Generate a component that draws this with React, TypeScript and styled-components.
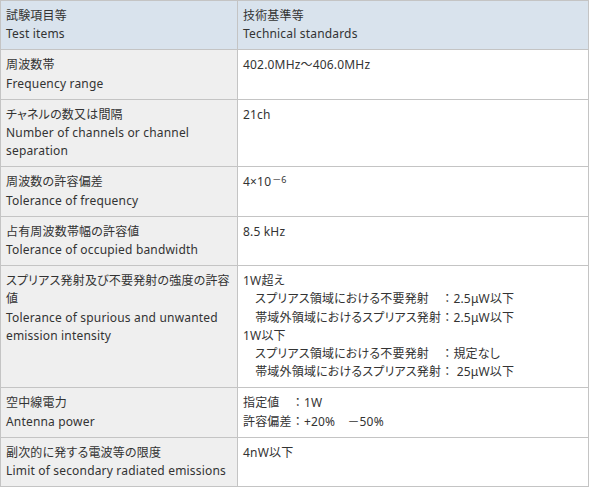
import React from 'react'
import styled, { createGlobalStyle, css } from 'styled-components'

const GlobalStyle = createGlobalStyle`
  body {
    margin: 0;
    background: #fff;
    font-family: "Noto Sans", "Noto Sans CJK JP", sans-serif;
  }
`

const Table = styled.table`
  width: 589px;
  border-collapse: collapse;
  table-layout: fixed;
  font-size: 12px;
  line-height: 18.2px;
  letter-spacing: 0.18px;
  font-feature-settings: "palt";
  color: #333;
`

const cell = css`
  border: 1px solid #c4c4c4;
  padding: 6px 6px 6px 5px;
  vertical-align: top;
  text-align: left;
`

const HeadCell = styled.th<{ $left?: boolean }>`
  ${cell}
  background: #d9e3ed;
  font-weight: normal;
  width: ${(p) => (p.$left ? '225px' : 'auto')};
`

const LabelCell = styled.td`
  ${cell}
  background: #efefef;
`

const ValueCell = styled.td`
  ${cell}
  background: #fff;
  white-space: pre;
`

const Line = styled.div`
  white-space: inherit;
`

// full-width colon keeps its natural width
const Colon = styled.span`
  font-feature-settings: normal;
`

const Sup = styled.sup`
  font-size: 9px;
  vertical-align: top;
  line-height: 1;
  position: relative;
  top: 2px;
  margin-left: 1px;
`

type Row = { label: string[]; value: React.ReactNode[] }

const withColon = (a: string, b: string) => (
  <>
    {a}
    <Colon>：</Colon>
    {b}
  </>
)

const rows: Row[] = [
  { label: ['周波数帯', 'Frequency range'], value: ['402.0MHz～406.0MHz'] },
  {
    label: ['チャネルの数又は間隔', 'Number of channels or channel separation'],
    value: ['21ch'],
  },
  {
    label: ['周波数の許容偏差', 'Tolerance of frequency'],
    value: [
      <>
        4×10<Sup>－6</Sup>
      </>,
    ],
  },
  {
    label: ['占有周波数帯幅の許容値', 'Tolerance of occupied bandwidth'],
    value: ['8.5 kHz'],
  },
  {
    label: [
      'スプリアス発射及び不要発射の強度の許容値',
      'Tolerance of spurious and unwanted emission intensity',
    ],
    value: [
      '1W超え',
      withColon('　スプリアス領域における不要発射　', '2.5μW以下'),
      withColon('　帯域外領域におけるスプリアス発射', '2.5μW以下'),
      '1W以下',
      withColon('　スプリアス領域における不要発射　', '規定なし'),
      withColon('　帯域外領域におけるスプリアス発射', ' 25μW以下'),
    ],
  },
  {
    label: ['空中線電力', 'Antenna power'],
    value: [withColon('指定値　', '1W'), withColon('許容偏差', '+20%　－50%')],
  },
  {
    label: ['副次的に発する電波等の限度', 'Limit of secondary radiated emissions'],
    value: ['4nW以下'],
  },
]

export default function App() {
  return (
    <>
      <GlobalStyle />
      <Table>
        <thead>
          <tr>
            <HeadCell $left>
              <Line>試験項目等</Line>
              <Line>Test items</Line>
            </HeadCell>
            <HeadCell>
              <Line>技術基準等</Line>
              <Line>Technical standards</Line>
            </HeadCell>
          </tr>
        </thead>
        <tbody>
          {rows.map((r, i) => (
            <tr key={i}>
              <LabelCell>
                {r.label.map((l, j) => (
                  <Line key={j}>{l}</Line>
                ))}
              </LabelCell>
              <ValueCell>
                {r.value.map((v, j) => (
                  <Line key={j}>{v}</Line>
                ))}
              </ValueCell>
            </tr>
          ))}
        </tbody>
      </Table>
    </>
  )
}
